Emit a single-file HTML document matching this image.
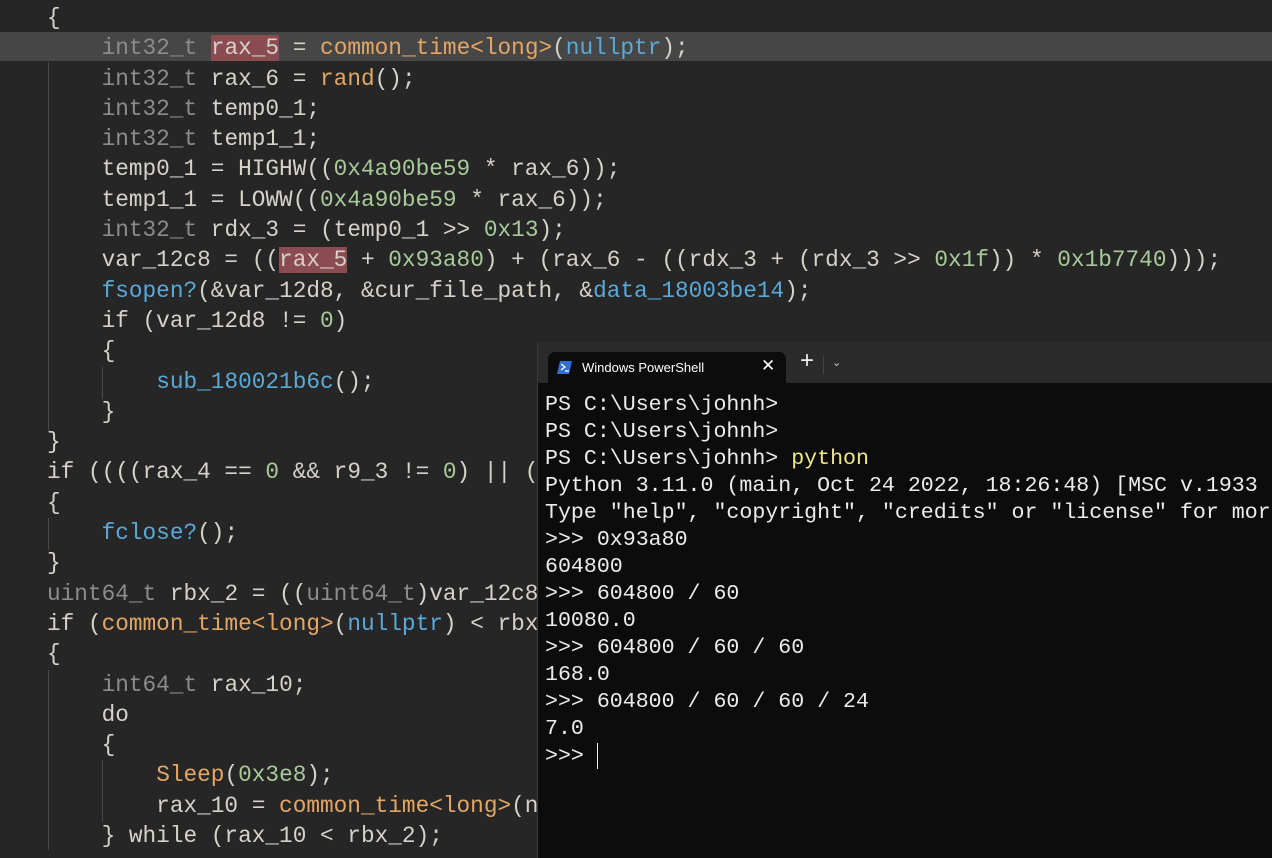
<!DOCTYPE html><html><head><style>
body{margin:0;width:1272px;height:858px;overflow:hidden;background:#262626;position:relative;font-family:"Liberation Mono",monospace}
.c{position:absolute;left:6px;top:3px;font-size:22.75px;color:#d6d2ca;}
.l{height:30.3px;line-height:30.3px;position:relative;white-space:pre}
.t{color:#8c8c8c}.f{color:#e3a665}.n{color:#a8c99a}.b{color:#5aa9d8}
.h{background:#8a4c50}
.hl{position:absolute;left:0;top:32px;width:1272px;height:29px;background:#464646}
.g{position:absolute;width:1px;background:#4a4a4a}
.term{position:absolute;left:537px;top:342px;width:735px;height:516px;background:#0c0c0c;border-left:1px solid #3a3a3a}
.bar{height:41px;background:#2b2b2b;position:relative}
.tab{position:absolute;left:10px;top:10px;width:238px;height:31px;background:#0c0c0c;border-radius:7px 7px 0 0;font-family:"Liberation Sans",sans-serif;font-size:13px;color:#fff}
.tt{font-size:21.6px;color:#ececec;white-space:pre;padding-left:7px;padding-top:9px;line-height:27px}
.y{color:#f0e68c}
</style></head><body>
<div class="hl"></div>
<div class="g" style="left:48px;top:62px;height:370px"></div>
<div class="g" style="left:102px;top:367px;height:32px"></div>
<div class="g" style="left:48px;top:518px;height:32px"></div>
<div class="g" style="left:48px;top:670px;height:180px"></div>
<div class="g" style="left:102px;top:760px;height:62px"></div>
<div class="c"><div class="l">   {</div><div class="l">       <span class="t">int32_t</span> <span class="h">rax_5</span> = <span class="f">common_time&lt;long&gt;</span>(<span class="b">nullptr</span>);</div><div class="l">       <span class="t">int32_t</span> rax_6 = <span class="f">rand</span>();</div><div class="l">       <span class="t">int32_t</span> temp0_1;</div><div class="l">       <span class="t">int32_t</span> temp1_1;</div><div class="l">       temp0_1 = HIGHW((<span class="n">0x4a90be59</span> * rax_6));</div><div class="l">       temp1_1 = LOWW((<span class="n">0x4a90be59</span> * rax_6));</div><div class="l">       <span class="t">int32_t</span> rdx_3 = (temp0_1 &gt;&gt; <span class="n">0x13</span>);</div><div class="l">       var_12c8 = ((<span class="h">rax_5</span> + <span class="n">0x93a80</span>) + (rax_6 - ((rdx_3 + (rdx_3 &gt;&gt; <span class="n">0x1f</span>)) * <span class="n">0x1b7740</span>)));</div><div class="l">       <span class="b">fsopen?</span>(&amp;var_12d8, &amp;cur_file_path, &amp;<span class="b">data_18003be14</span>);</div><div class="l">       if (var_12d8 != <span class="n">0</span>)</div><div class="l">       {</div><div class="l">           <span class="b">sub_180021b6c</span>();</div><div class="l">       }</div><div class="l">   }</div><div class="l">   if ((((rax_4 == <span class="n">0</span> &amp;&amp; r9_3 != <span class="n">0</span>) || (</div><div class="l">   {</div><div class="l">       <span class="b">fclose?</span>();</div><div class="l">   }</div><div class="l">   <span class="t">uint64_t</span> rbx_2 = ((<span class="t">uint64_t</span>)var_12c8</div><div class="l">   if (<span class="f">common_time&lt;long&gt;</span>(<span class="b">nullptr</span>) &lt; rbx</div><div class="l">   {</div><div class="l">       <span class="t">int64_t</span> rax_10;</div><div class="l">       do</div><div class="l">       {</div><div class="l">           <span class="f">Sleep</span>(<span class="n">0x3e8</span>);</div><div class="l">           rax_10 = <span class="f">common_time&lt;long&gt;</span>(n</div><div class="l">       } while (rax_10 &lt; rbx_2);</div></div>
<div class="term">
<div class="bar">
<div class="tab">
<svg style="position:absolute;left:9px;top:9px" width="15" height="13"><path d="M3 0h12l-3 13H0z" fill="#2f6fd6"/><path d="M4 3l4 3-4 3M8 10h4" stroke="#fff" stroke-width="1.3" fill="none"/></svg>
<span style="position:absolute;left:34px;top:8px">Windows PowerShell</span>
<span style="position:absolute;left:213px;top:4px;font-size:17px">✕</span>
</div>
<span style="position:absolute;left:262px;top:7px;color:#eee;font-family:'Liberation Sans';font-size:24px;line-height:24px">+</span>
<div style="position:absolute;left:285px;top:14px;width:1px;height:18px;background:#444"></div>
<span style="position:absolute;left:294px;top:14px;color:#ccc;font-family:'Liberation Sans';font-size:11px">&#8964;</span>
</div>
<div class="tt">PS C:\Users\johnh&gt;
PS C:\Users\johnh&gt;
PS C:\Users\johnh&gt; <span class="y">python</span>
Python 3.11.0 (main, Oct 24 2022, 18:26:48) [MSC v.1933
Type "help", "copyright", "credits" or "license" for mor
&gt;&gt;&gt; 0x93a80
604800
&gt;&gt;&gt; 604800 / 60
10080.0
&gt;&gt;&gt; 604800 / 60 / 60
168.0
&gt;&gt;&gt; 604800 / 60 / 60 / 24
7.0
&gt;&gt;&gt; <span style="display:inline-block;width:1px;height:26px;background:#eee;vertical-align:middle"></span></div>
</div>
</body></html>
